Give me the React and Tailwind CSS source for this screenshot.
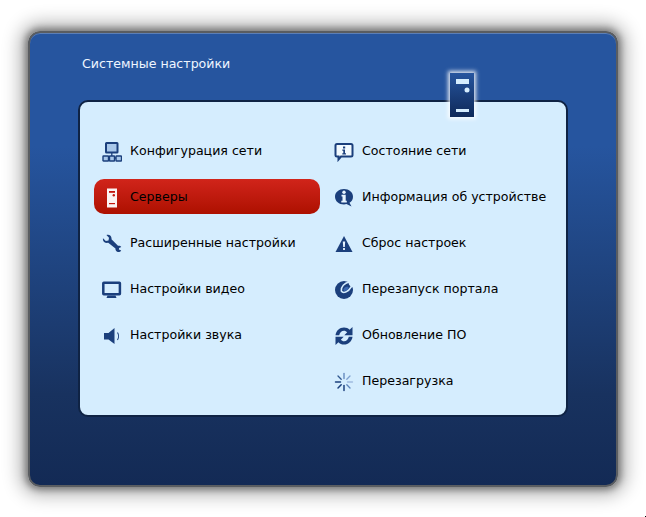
const C = "#1b3f7c";
const Net = () => (
  <svg width="20" height="20" viewBox="0 0 20 20" fill="none">
    <rect x="4" y="1" width="11.500" height="9.500" rx="0.500" fill="#a9c8ea" stroke={C} strokeWidth="2" />
    <path d="M9.800 11v3M3 16h14" stroke={C} strokeWidth="1.300" />
    <rect x="1" y="14" width="5.500" height="5" rx="0.500" fill="#a9c8ea" stroke={C} strokeWidth="1.400" />
    <rect x="7.500" y="14" width="5" height="5" rx="0.500" fill="#a9c8ea" stroke={C} strokeWidth="1.400" />
    <rect x="14" y="14" width="5.500" height="5" rx="0.500" fill="#a9c8ea" stroke={C} strokeWidth="1.400" />
  </svg>
);
const ServerRed = () => (
  <svg width="20" height="20" viewBox="0 0 20 20">
    <rect x="5" y="0.500" width="10" height="19" fill="#fff" opacity="0.95" />
    <rect x="7" y="3" width="6" height="1.800" fill="#c4150c" />
    <circle cx="11.800" cy="7.300" r="1.200" fill="#c4150c" />
    <rect x="7" y="15" width="6" height="1.200" fill="#c4150c" />
  </svg>
);
const Wrench = () => (
  <svg width="20" height="20" viewBox="0 0 20 20">
    <path d="M1 4.200 3.800 7 6.500 6.400 7 3.700 4.400 1C7.300-.2 10 2.200 9.500 5.300L16 11.800c1.300-.3 2.600.1 3.300 1.200l-2.200 1-.2 1.600 2.300.9c-.8 1.400-2.600 2-4 1.300-1.300-.6-2-2-1.700-3.300L6.200 8.800C3 9.500.3 7.200 1 4.200Z" fill={C} />
  </svg>
);
const Monitor = () => (
  <svg width="20" height="20" viewBox="0 0 20 20" fill="none">
    <rect x="1.300" y="2.800" width="16.600" height="11.400" fill="#d5edfe" stroke={C} strokeWidth="2.500" rx="0.500" />
    <path d="M5.500 15.500H13.500L14.500 18H4.500Z" fill={C} />
  </svg>
);
const Speaker = () => (
  <svg width="20" height="20" viewBox="0 0 20 20" fill="none">
    <path d="M2 7H6.500L12.500 2V18L6.500 13.500H2Z" fill={C} />
    <path d="M15.500 6.500C16.800 8.500 16.800 12 15.500 14" stroke={C} strokeWidth="1.100" />
  </svg>
);
const Bubble = () => (
  <svg width="20" height="20" viewBox="0 0 20 20" fill="none">
    <path d="M3 2H17C18 2 18.500 2.500 18.500 3.500V13C18.500 14 18 14.500 17 14.500H7L4.500 17.500V14.500H3C2 14.500 1.500 14 1.500 13V3.500C1.500 2.500 2 2 3 2Z" fill="#f2faff" stroke={C} strokeWidth="2" />
    <rect x="9" y="4.500" width="2.200" height="2" fill={C} />
    <path d="M8.300 7.500H11V11.300H12V12.500H8.300V11.300H9.300V8.700H8.300Z" fill={C} />
  </svg>
);
const InfoBubble = () => (
  <svg width="20" height="20" viewBox="0 0 20 20">
    <path d="M10 1c5 0 9 3.200 9 7.700 0 3-1.500 4.800-3.500 6.100l2 3.700-5-2.400c-.8.200-1.700.3-2.500.3-5 0-9-3.200-9-7.700S5 1 10 1Z" fill={C} />
    <circle cx="10" cy="4.300" r="1.700" fill="#e8f5ff" />
    <path d="M7.500 6.800h4.200v6h1.100v1.700H7.300v-1.700h1.200V8.500h-1Z" fill="#e8f5ff" />
  </svg>
);
const Warn = () => (
  <svg width="20" height="20" viewBox="0 0 20 20">
    <path d="M10 2 18.500 18H1.500Z" fill={C} />
    <path d="M8.800 7.500h2.400l-.4 5.500H9.200Z" fill="#e8f5ff" />
    <rect x="9.100" y="14" width="1.800" height="2" fill="#e8f5ff" />
  </svg>
);
const Portal = () => (
  <svg width="20" height="20" viewBox="0 0 20 20" fill="none">
    <circle cx="10" cy="10" r="9" fill={C} />
    <path d="M13.500 0H20V7.500L17 7 15 4.500Z" fill="#d5edfe" />
    <path d="M15 2C10.500 3 6.800 6.800 7.300 11 9 13.800 14 12.500 17.500 6.500" stroke="#d5edfe" strokeWidth="1.500" />
    <path d="M9.300 9.500c.5-1.500 2-2.700 4-3l1.700 1.500c-1 1.800-3 3.200-5 3Z" fill="#3a68b0" />
  </svg>
);
const Refresh = () => (
  <svg width="20" height="20" viewBox="0 0 20 20" fill={C}>
    <path d="M1.500 9.300C2 4.800 5.500 1.500 10 1.500c2.300 0 4.200.9 5.600 2.300L18.500 1v8.300h-8.200l2.900-3C12.300 5.400 11.200 4.800 10 4.800c-2.400 0-4.300 1.900-4.800 4.500Z" />
    <path d="M18.500 10.700C18 15.200 14.500 18.500 10 18.500c-2.300 0-4.200-.9-5.600-2.300L1.500 19v-8.300h8.200l-2.900 3c.9.900 2 1.500 3.200 1.500 2.400 0 4.300-1.900 4.800-4.500Z" />
  </svg>
);
const Spinner = () => (
  <svg width="20" height="20" viewBox="0 0 20 20" fill="none" strokeLinecap="round">
    <path d="M10 1.500V6.500" stroke="#5d83ba" strokeWidth="1.300" />
    <path d="M16 4 12.800 7.200" stroke="#7ea0cf" strokeWidth="1.300" />
    <path d="M18.500 10H13.500" stroke="#a0bbdf" strokeWidth="1.300" />
    <path d="M16 16 12.800 12.800" stroke="#5d83ba" strokeWidth="1.300" />
    <path d="M10 18.500V13.500" stroke={C} strokeWidth="1.500" />
    <path d="M4 16 7.200 12.800" stroke={C} strokeWidth="1.500" />
    <path d="M1.500 10H6.500" stroke={C} strokeWidth="1.500" />
    <path d="M4 4 7.200 7.200" stroke="#30578f" strokeWidth="1.300" />
  </svg>
);

const Row = ({ icon, label, active }) => (
  <div className={`flex h-[35px] items-center rounded-[10px] pl-[8px] ${active ? "bg-gradient-to-b from-[#d1241a] to-[#ad1000]" : ""}`}>
    <span className="mt-[2px] flex w-[20px] shrink-0 items-center justify-center">{icon}</span>
    <span className="ml-[8px] mt-[1px] whitespace-nowrap text-[12.6px] leading-none text-black">{label}</span>
  </div>
);

export default function App() {
  return (
    <div className="relative h-[517px] w-[646px] overflow-hidden bg-white pl-[28px] pt-[31px] font-['DejaVu_Sans',sans-serif]">
      <div className="relative h-[456px] w-[590px] rounded-[12px] border-2 border-[#5a5d61] bg-[linear-gradient(to_bottom,#26559f_0%,#26559f_25%,#18325f_80%,#132a55_100%)] pl-[52px] pt-[23px] shadow-[0_0_6px_3px_rgba(0,0,0,0.35),0_0_18px_8px_rgba(0,0,0,0.3),inset_0_1px_0_rgba(255,255,255,0.25)]">
        <div className="text-[12.6px] leading-[16px] text-[#eef5ff]">Системные настройки</div>
        <div className="relative -ml-[4px] mt-[28px] h-[317px] w-[490px] rounded-[10px] border-2 border-[#0f2344] bg-[#d5edfe] pl-[14px] pt-[31px]">
          <div className="absolute left-[370px] top-[-29px] flex h-[44px] w-[24px] justify-center bg-gradient-to-b from-[#26559f] to-[#0f2a5a] shadow-[0_0_4px_2px_rgba(255,255,255,0.85)]">
            <svg width="24" height="44" viewBox="0 0 24 44">
              <rect x="6" y="6" width="13" height="5" fill="#d5edfe" />
              <circle cx="17" cy="17" r="2.500" fill="#d5edfe" />
              <rect x="6" y="36" width="13" height="3" fill="#d5edfe" />
            </svg>
          </div>
          <div className="grid grid-cols-[226px_226px] gap-x-[6px]">
            <div className="flex flex-col gap-y-[11px]">
              <Row icon={<Net />} label="Конфигурация сети" />
              <Row icon={<ServerRed />} label="Серверы" active />
              <Row icon={<Wrench />} label="Расширенные настройки" />
              <Row icon={<Monitor />} label="Настройки видео" />
              <Row icon={<Speaker />} label="Настройки звука" />
            </div>
            <div className="flex flex-col gap-y-[11px]">
              <Row icon={<Bubble />} label="Состояние сети" />
              <Row icon={<InfoBubble />} label="Информация об устройстве" />
              <Row icon={<Warn />} label="Сброс настроек" />
              <Row icon={<Portal />} label="Перезапуск портала" />
              <Row icon={<Refresh />} label="Обновление ПО" />
              <Row icon={<Spinner />} label="Перезагрузка" />
            </div>
          </div>
        </div>
      </div>
      <span className="absolute left-[645px] top-[516px] h-px w-px bg-black" />
    </div>
  );
}
